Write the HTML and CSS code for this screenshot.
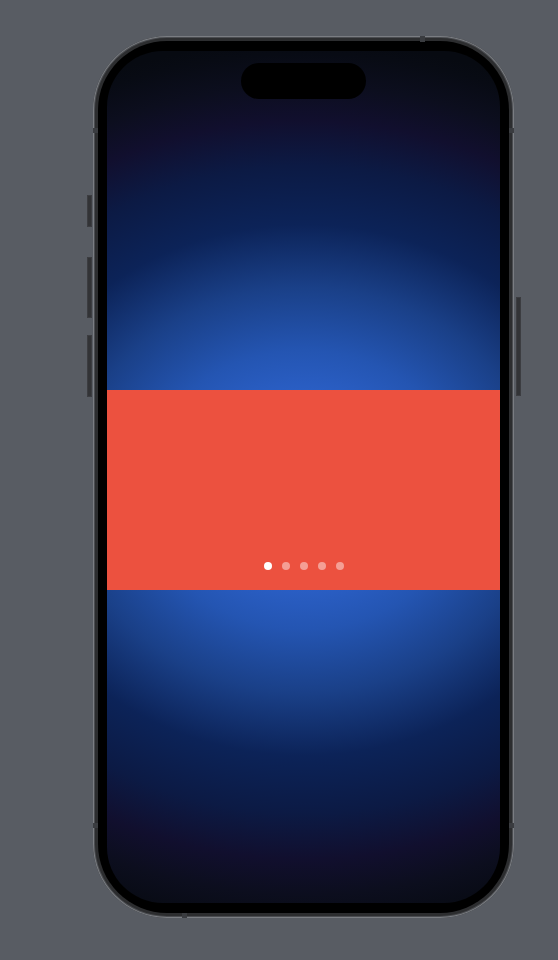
FILE: index.html
```html
<!DOCTYPE html>
<html lang="en">
<head>
<meta charset="utf-8">
<title>Onboarding</title>
<link rel="stylesheet" href="styles.css">
</head>
<body>
  <div class="device">
    <span class="btn btn-action"></span>
    <span class="btn btn-vol-up"></span>
    <span class="btn btn-vol-down"></span>
    <span class="btn btn-power"></span>
    <span class="band band-top"></span>
    <span class="band band-bottom"></span>
    <span class="band band-left-top"></span>
    <span class="band band-left-bottom"></span>
    <span class="band band-right-top"></span>
    <span class="band band-right-bottom"></span>
    <div class="bezel">
      <div class="screen">
        <div class="island"></div>
        <section class="banner">
          <div class="dots">
            <span class="dot active"></span>
            <span class="dot"></span>
            <span class="dot"></span>
            <span class="dot"></span>
            <span class="dot"></span>
          </div>
        </section>
      </div>
    </div>
  </div>
</body>
</html>
```

FILE: styles.css
```css
* { box-sizing: border-box; }

html, body {
  margin: 0;
  padding: 0;
  background: #585c63;
  font-family: "Liberation Sans", Arial, sans-serif;
}

body {
  padding: 36px 0 0 93px;
  height: 960px;
  overflow: hidden;
}

.device {
  position: relative;
  width: 421px;
  height: 882px;
  border-radius: 74px;
  background: #2c2d2f;
  box-shadow: inset 0 0 0 1px #7a7d82, inset 0 0 0 2px #4a4c50;
  padding: 5px;
}

.bezel {
  height: 100%;
  border-radius: 69px;
  background: #000;
  padding: 10px 9px;
}

.screen {
  position: relative;
  height: 100%;
  border-radius: 56px;
  overflow: hidden;
  display: flex;
  flex-direction: column;
  background:
    radial-gradient(ellipse 520px 450px at 50% 439px,
      #2c62cc 0%,
      #2a5ec4 22%,
      #2455b2 31%,
      #1a4088 45%,
      #0c2358 59%,
      #0c1a44 72%,
      #110f2e 82%,
      #0c0e1e 90%,
      #080b14 97%,
      #070a11 100%);
}

.island {
  position: absolute;
  top: 12px;
  left: 50%;
  width: 125px;
  height: 36px;
  margin-left: -62.5px;
  border-radius: 18px;
  background: #000;
}

.banner {
  margin-top: 339px;
  height: 200px;
  background: #ec513f;
  display: flex;
  flex-direction: column;
  justify-content: flex-end;
  align-items: center;
  padding-bottom: 20px;
}

.dots {
  display: flex;
  gap: 10px;
}

.dot {
  width: 8px;
  height: 8px;
  border-radius: 50%;
  background: rgba(255, 255, 255, 0.45);
}

.dot.active {
  background: #fff;
}

/* hardware buttons */
.btn {
  position: absolute;
  width: 5px;
  background: #323336;
  box-shadow: inset 0 0 0 1px #3c3d41;
  border-radius: 1px;
}

.btn-action { left: -6px; top: 159px; height: 32px; }
.btn-vol-up { left: -6px; top: 221px; height: 61px; }
.btn-vol-down { left: -6px; top: 299px; height: 62px; }
.btn-power { right: -7px; top: 261px; height: 99px; }

/* antenna bands */
.band {
  position: absolute;
  background: #3a3c40;
}

.band-top { top: 0; left: 327px; width: 5px; height: 6px; }
.band-bottom { bottom: 0; left: 89px; width: 5px; height: 5px; }
.band-left-top { left: 0; top: 92px; width: 5px; height: 5px; }
.band-left-bottom { left: 0; top: 787px; width: 5px; height: 5px; }
.band-right-top { right: 0; top: 92px; width: 5px; height: 5px; }
.band-right-bottom { right: 0; top: 787px; width: 5px; height: 5px; }
```
